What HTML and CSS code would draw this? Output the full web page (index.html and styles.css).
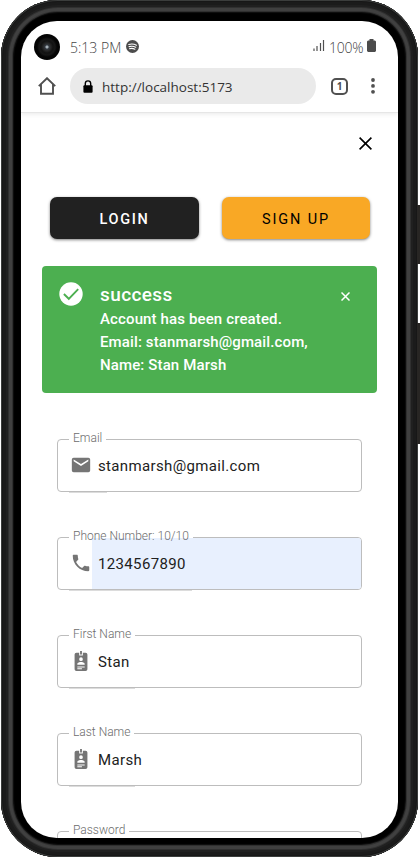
FILE: index.html
```html
<!DOCTYPE html>
<html lang="en">
<head>
<meta charset="utf-8">
<title>Sign up</title>
<link rel="stylesheet" href="styles.css">
</head>
<body>
<div class="device">
  <span class="side-key power"></span>
  <span class="side-key volume"></span>
  <div class="screen">
    <header class="chrome">
      <div class="status">
        <span class="camera"></span>
        <span class="time">5:13 PM</span>
        <svg class="spotify" viewBox="0 0 24 24"><circle cx="12" cy="12" r="12" fill="#4c4c4c"/><path d="M5 8.2c5-1.3 10-.9 14.3 1.3M5.7 12.2c4.3-1.2 8.700-.7 12.300 1.200M6.400 16c3.700-.9 7.200-.5 10 1.100" fill="none" stroke="#fff" stroke-width="2" stroke-linecap="round"/></svg>
        <svg class="signal" viewBox="0 0 12 13"><path d="M1 9.500V12M4 7v5M7.500 4v8M10.500 1v11" stroke="#505050" stroke-width="1.200" fill="none"/></svg>
        <span class="percent">100%</span>
        <svg class="battery" viewBox="0 0 9 13"><path d="M2.500 0h4v1.500H8l1 1V12l-1 1H1l-1-1V2.500l1-1h1.500z" fill="#4c4c4c"/></svg>
      </div>
      <div class="toolbar">
        <svg class="home" viewBox="0 0 18 18"><path d="M.8 9.100 9 1.200l8.200 7.900M3 7.500v9.300h12V7.500" fill="none" stroke="#505050" stroke-width="1.900"/></svg>
        <div class="address">
          <svg class="lock" viewBox="0 0 10 13"><path d="M2.300 6V3.600a2.700 2.700 0 0 1 5.400 0V6" fill="none" stroke="#000" stroke-width="1.400"/><rect x=".4" y="5.200" width="9.200" height="7.600" rx="1" fill="#000"/></svg>
          <span>http://localhost:5173</span>
        </div>
        <span class="tabs">1</span>
        <svg class="more" viewBox="0 0 4 16"><circle cx="2" cy="2" r="1.900"/><circle cx="2" cy="7.900" r="1.900"/><circle cx="2" cy="13.800" r="1.900"/></svg>
      </div>
    </header>
    <main class="page">
      <div class="close-row"><svg class="close" viewBox="0 0 13 13"><path d="m.6.600 11.800 11.800M12.400.600.600 12.400"/></svg></div>
      <div class="actions">
        <button class="btn dark">LOGIN</button>
        <button class="btn amber">SIGN UP</button>
      </div>
      <section class="alert">
        <svg class="check" viewBox="0 0 24 24"><circle cx="12" cy="12" r="11.700" fill="#fff"/><path d="m4.900 12 4.900 4.800 9.400-9.700" fill="none" stroke="#4caf50" stroke-width="1.900"/></svg>
        <div class="message">
          <h2>success</h2>
          <p>Account has been created.<br>Email: stanmarsh@gmail.com,<br>Name: Stan Marsh</p>
        </div>
        <svg class="dismiss" viewBox="0 0 9 9"><path d="m.5.500 8 8M8.500.500l-8 8"/></svg>
      </section>
      <form class="fields">
        <fieldset class="field">
          <legend>Email</legend>
          <svg class="icon" viewBox="0 0 24 24"><path d="M20 4H4a2 2 0 0 0-2 2v12a2 2 0 0 0 2 2h16a2 2 0 0 0 2-2V6a2 2 0 0 0-2-2m0 4-8 5-8-5V6l8 5 8-5z"/></svg>
          <span class="value">stanmarsh@gmail.com</span>
        </fieldset>
        <fieldset class="field wide">
          <legend>Phone Number: 10/10</legend>
          <svg class="icon" viewBox="0 0 24 24"><path d="M6.620 10.790c1.440 2.830 3.760 5.140 6.590 6.590l2.200-2.200c.270-.27.670-.36 1.020-.24 1.120.370 2.330.570 3.570.570.550 0 1 .450 1 1V20c0 .550-.45 1-1 1C10.610 21 3 13.390 3 4c0-.55.450-1 1-1h3.500c.550 0 1 .450 1 1 0 1.250.200 2.450.570 3.570.110.350.030.740-.25 1.020z"/></svg>
          <span class="value filled">1234567890</span>
        </fieldset>
        <fieldset class="field medium">
          <legend>First Name</legend>
          <svg class="icon" viewBox="0 0 24 24"><path d="M17 3h-3v3h-4V3H7a2 2 0 0 0-2 2v16a2 2 0 0 0 2 2h10a2 2 0 0 0 2-2V5a2 2 0 0 0-2-2m-5 5a2 2 0 0 1 2 2 2 2 0 0 1-2 2 2 2 0 0 1-2-2 2 2 0 0 1 2-2m-4 8v-1c0-1.330 2.670-2 4-2s4 .670 4 2v1zm5 5H8v-1h5zm3-2H8v-1h8zM13 5h-2V1h2z"/></svg>
          <span class="value">Stan</span>
        </fieldset>
        <fieldset class="field medium">
          <legend>Last Name</legend>
          <svg class="icon" viewBox="0 0 24 24"><path d="M17 3h-3v3h-4V3H7a2 2 0 0 0-2 2v16a2 2 0 0 0 2 2h10a2 2 0 0 0 2-2V5a2 2 0 0 0-2-2m-5 5a2 2 0 0 1 2 2 2 2 0 0 1-2 2 2 2 0 0 1-2-2 2 2 0 0 1 2-2m-4 8v-1c0-1.330 2.670-2 4-2s4 .670 4 2v1zm5 5H8v-1h5zm3-2H8v-1h8zM13 5h-2V1h2z"/></svg>
          <span class="value">Marsh</span>
        </fieldset>
        <fieldset class="field">
          <legend>Password</legend>
          <span class="value"></span>
        </fieldset>
      </form>
    </main>
  </div>
</div>
</body>
</html>
```
FILE: styles.css
```css
* { box-sizing: border-box; }
html, body { margin: 0; height: 857px; overflow: hidden; background: #fff; }
body { font-family: Roboto, "Liberation Sans", sans-serif; color: #212121; }
svg { display: block; flex: none; }

.device {
  position: relative;
  width: 417px;
  height: 857px;
  margin-left: 1px;
  padding: 21px 20px 19px 20px;
  border-radius: 57px;
  background: #000;
  box-shadow:
    inset 0 0 0 1px #3b3d3c,
    inset 0 0 0 2px #171717,
    inset 0 0 0 5px #1b1b1b,
    inset 0 0 0 7px #202020,
    inset 0 0 0 8px #303030,
    inset 0 0 0 11px #404040,
    inset 0 0 0 12px #303030,
    inset 0 0 1px 13px #101010;
}
.side-key {
  position: absolute;
  right: -2px;
  width: 3px;
  background: #282624;
}
.power { top: 205px; height: 59px; }
.volume { top: 323px; height: 121px; }
.screen {
  height: 817px;
  overflow: hidden;
  border-radius: 36px;
  background: #fff;
}

.chrome {
  position: relative;
  height: 92px;
  border-bottom: 1px solid #e6e6e6;
  box-shadow: 0 1px 5px rgba(0, 0, 0, .09);
  font-family: "Open Sans", "Noto Sans", sans-serif;
}
.status {
  display: flex;
  align-items: center;
  height: 47px;
  padding: 5px 22px 0 13px;
}
.camera {
  width: 26px;
  height: 26px;
  border-radius: 50%;
  background: radial-gradient(circle, #a4aeb5 0 1px, #343a42 2px, #252525 4px, #121212 6px, #171717 8px, #050505 10px, #000 100%);
}
.time, .percent { font-size: 14px; font-weight: 300; color: #444; white-space: nowrap; }
.time { width: 51px; margin-left: 10px; }
.spotify { width: 13px; height: 13px; margin: -2px 0 0 5px; }
.signal { width: 12px; height: 13px; margin: -3px 4px 0 auto; }
.percent { width: 35px; letter-spacing: -.2px; }
.battery { width: 9px; height: 13px; margin: -4px 0 0 3px; }
.toolbar {
  display: flex;
  align-items: center;
  height: 36px;
  padding: 0 23px 0 17px;
}
.home { width: 18px; height: 18px; margin-right: 14px; }
.address {
  display: flex;
  align-items: center;
  width: 246px;
  height: 36px;
  padding-left: 13px;
  border-radius: 18px;
  background: #eaeaea;
  color: #333;
  font-size: 13.5px;
}
.address span { padding-top: 1px; }
.lock { width: 10px; height: 13px; margin-right: 9px; }
.tabs {
  width: 17px;
  height: 17px;
  margin-left: 15px;
  border: 2px solid #505050;
  border-radius: 5px;
  color: #505050;
  font-size: 10px;
  font-weight: 700;
  line-height: 13px;
  text-align: center;
}
.more { width: 4px; height: 16px; margin-left: auto; fill: #505050; }

.close-row { display: flex; justify-content: flex-end; padding: 24px 26px 0 0; }
.close { width: 13px; height: 13px; fill: none; stroke: #000; stroke-width: 1.6; }
.actions {
  display: grid;
  grid-template-columns: 149px 148px;
  column-gap: 23px;
  padding: 47px 0 0 29px;
}
.btn {
  height: 42px;
  padding: 3px 0 0;
  border: 0;
  border-radius: 7px;
  box-shadow: 0 1px 3px rgba(0, 0, 0, .5);
  font: 500 14.5px/20px Roboto, sans-serif;
  letter-spacing: 1.7px;
}
.dark { background: #212121; color: #fff; }
.amber { background: #f9a825; color: #000; font-weight: 400; letter-spacing: 1.85px; }
.alert {
  display: flex;
  align-items: flex-start;
  width: 335px;
  height: 127px;
  margin: 27px 0 0 21px;
  padding: 16px 27px 0 17px;
  border-radius: 4px;
  background: #4caf50;
  color: #fff;
}
.check { width: 24px; height: 24px; }
.message { margin-left: 17px; white-space: nowrap; }
.message h2 { margin: 0; font-size: 19px; font-weight: 500; line-height: 26px; letter-spacing: .4px; }
.message p { margin: 0; font-size: 15px; font-weight: 500; line-height: 23px; letter-spacing: .13px; }
.dismiss { width: 9px; height: 9px; margin: 10px 0 0 auto; fill: none; stroke: #fff; stroke-width: 1.5; }

.fields { display: grid; row-gap: 39px; width: 305px; margin: 40px 0 0 36px; }
.field {
  position: relative;
  display: flex;
  align-items: center;
  min-width: 0;
  height: 59px;
  margin: 0;
  padding: 0 0 0 11px;
  border: 1px solid #bdbdbd;
  border-radius: 4px;
}
.field::after {
  content: "";
  position: absolute;
  left: 11px;
  bottom: -2px;
  width: 38px;
  height: 1px;
  background: #dcdcdc;
}
.field.wide::after { width: 123px; }
.field.medium::after { width: 66px; }
.field legend {
  position: relative;
  top: -1px;
  z-index: 1;
  height: 13px;
  margin: 0;
  padding: 0 4px;
  color: #6c6c6c;
  font-size: 12px;
  font-weight: 300;
  line-height: 13px;
}
.icon { width: 22px; height: 22px; margin: -8px 0 0 1px; fill: #757575; }
.value {
  flex: 1;
  height: 51px;
  margin-top: -6px;
  padding-left: 6px;
  color: #212121;
  font-size: 15px;
  line-height: 52px;
  letter-spacing: .35px;
}
.filled { background: #e8f0fe; border-radius: 0 3px 3px 0; }
```
